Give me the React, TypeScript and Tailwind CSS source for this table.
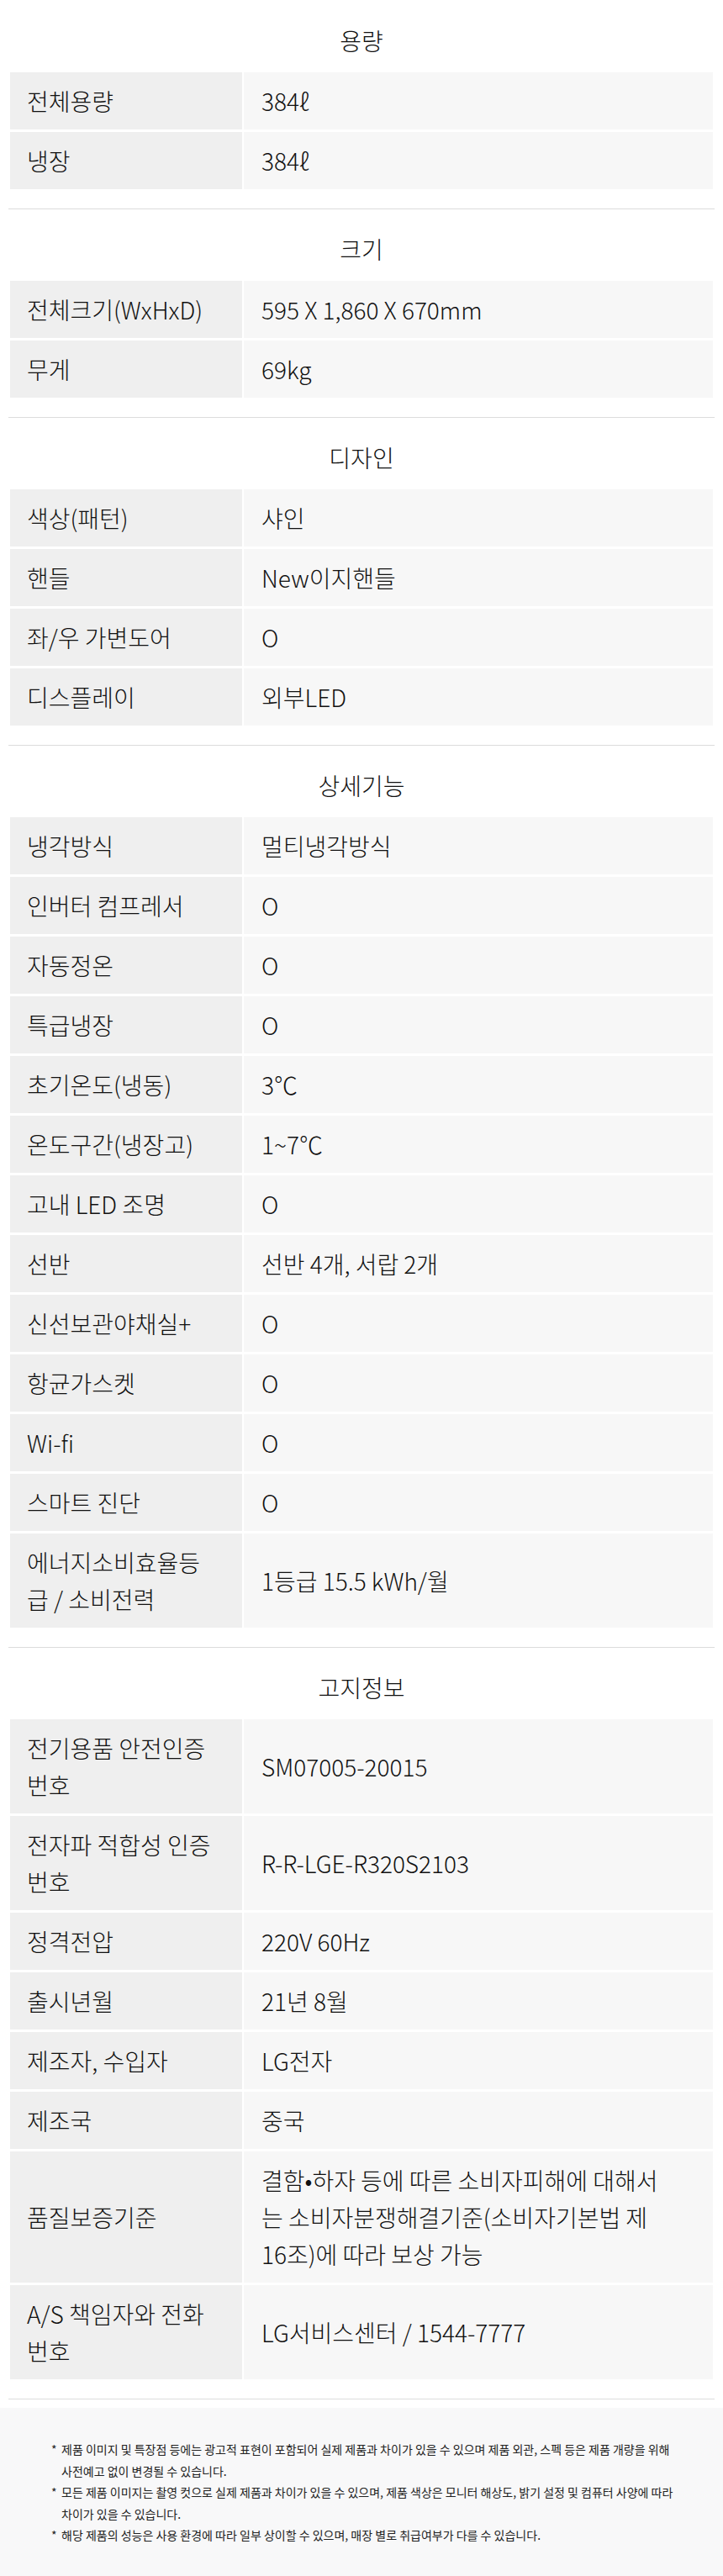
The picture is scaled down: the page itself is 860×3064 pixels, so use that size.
import React from "react";

type Cell = string | string[];
type Row = [Cell, Cell];
type Section = { title: string; rows: Row[] };

const sections: Section[] = [
  {
    title: "용량",
    rows: [
      ["전체용량", "384ℓ"],
      ["냉장", "384ℓ"],
    ],
  },
  {
    title: "크기",
    rows: [
      ["전체크기(WxHxD)", "595 X 1,860 X 670mm"],
      ["무게", "69kg"],
    ],
  },
  {
    title: "디자인",
    rows: [
      ["색상(패턴)", "샤인"],
      ["핸들", "New이지핸들"],
      ["좌/우 가변도어", "O"],
      ["디스플레이", "외부LED"],
    ],
  },
  {
    title: "상세기능",
    rows: [
      ["냉각방식", "멀티냉각방식"],
      ["인버터 컴프레서", "O"],
      ["자동정온", "O"],
      ["특급냉장", "O"],
      ["초기온도(냉동)", "3℃"],
      ["온도구간(냉장고)", "1~7℃"],
      ["고내 LED 조명", "O"],
      ["선반", "선반 4개, 서랍 2개"],
      ["신선보관야채실+", "O"],
      ["항균가스켓", "O"],
      ["Wi-fi", "O"],
      ["스마트 진단", "O"],
      [["에너지소비효율등", "급 / 소비전력"], "1등급 15.5 kWh/월"],
    ],
  },
  {
    title: "고지정보",
    rows: [
      [["전기용품 안전인증", "번호"], "SM07005-20015"],
      [["전자파 적합성 인증", "번호"], "R-R-LGE-R320S2103"],
      ["정격전압", "220V 60Hz"],
      ["출시년월", "21년 8월"],
      ["제조자, 수입자", "LG전자"],
      ["제조국", "중국"],
      [
        "품질보증기준",
        [
          "결함•하자 등에 따른 소비자피해에 대해서",
          "는 소비자분쟁해결기준(소비자기본법 제",
          "16조)에 따라 보상 가능",
        ],
      ],
      [["A/S 책임자와 전화", "번호"], "LG서비스센터 / 1544-7777"],
    ],
  },
];

const notes: string[][] = [
  [
    "제품 이미지 및 특장점 등에는 광고적 표현이 포함되어 실제 제품과 차이가 있을 수 있으며 제품 외관, 스펙 등은 제품 개량을 위해",
    "사전예고 없이 변경될 수 있습니다.",
  ],
  [
    "모든 제품 이미지는 촬영 컷으로 실제 제품과 차이가 있을 수 있으며, 제품 색상은 모니터 해상도, 밝기 설정 및 컴퓨터 사양에 따라",
    "차이가 있을 수 있습니다.",
  ],
  ["해당 제품의 성능은 사용 환경에 따라 일부 상이할 수 있으며, 매장 별로 취급여부가 다를 수 있습니다."],
];

function Lines({ value }: { value: Cell }) {
  const lines = Array.isArray(value) ? value : [value];
  return (
    <div>
      {lines.map((line) => (
        <div key={line} className="whitespace-nowrap">
          {line}
        </div>
      ))}
    </div>
  );
}

function SpecSection({ section, first }: { section: Section; first: boolean }) {
  return (
    <section
      className={`mx-[10px] border-b border-[#dcdcdc] pb-[23px] ${first ? "pt-[26px]" : "pt-[25px]"}`}
    >
      <h2 className="mb-[16px] text-center text-[28px] leading-[44px] font-light text-[#111]">
        {section.title}
      </h2>
      <div className="grid grid-cols-[276px_1fr] gap-x-[2px] gap-y-[3px] px-[2px]">
        {section.rows.map(([label, value], i) => (
          <React.Fragment key={i}>
            <div className="flex items-center bg-[#efefef] px-[20px] py-[12px] text-[28px] leading-[44px] font-light text-[#111]">
              <Lines value={label} />
            </div>
            <div className="flex items-center bg-[#f7f7f7] px-[21px] py-[12px] text-[28px] leading-[44px] font-light text-[#111]">
              <Lines value={value} />
            </div>
          </React.Fragment>
        ))}
      </div>
    </section>
  );
}

export default function App() {
  return (
    <div
      className="w-[860px] bg-white"
      style={{ fontFamily: '"Noto Sans CJK KR", "Noto Sans", sans-serif' }}
    >
      {sections.map((s, i) => (
        <SpecSection key={s.title} section={s} first={i === 0} />
      ))}

      {/* Notice */}
      <div className="mt-[10px] bg-[#f8f8f9] pt-[37px] pb-[35px] pl-[73px] pr-[10px]">
        {notes.map((note, i) => (
          <div key={i} className="relative text-[14px] leading-[25.5px] text-[#222]">
            <span className="absolute -left-[12px] top-0">*</span>
            {note.map((line) => (
              <div key={line} className="whitespace-nowrap">
                {line}
              </div>
            ))}
          </div>
        ))}
      </div>
    </div>
  );
}
